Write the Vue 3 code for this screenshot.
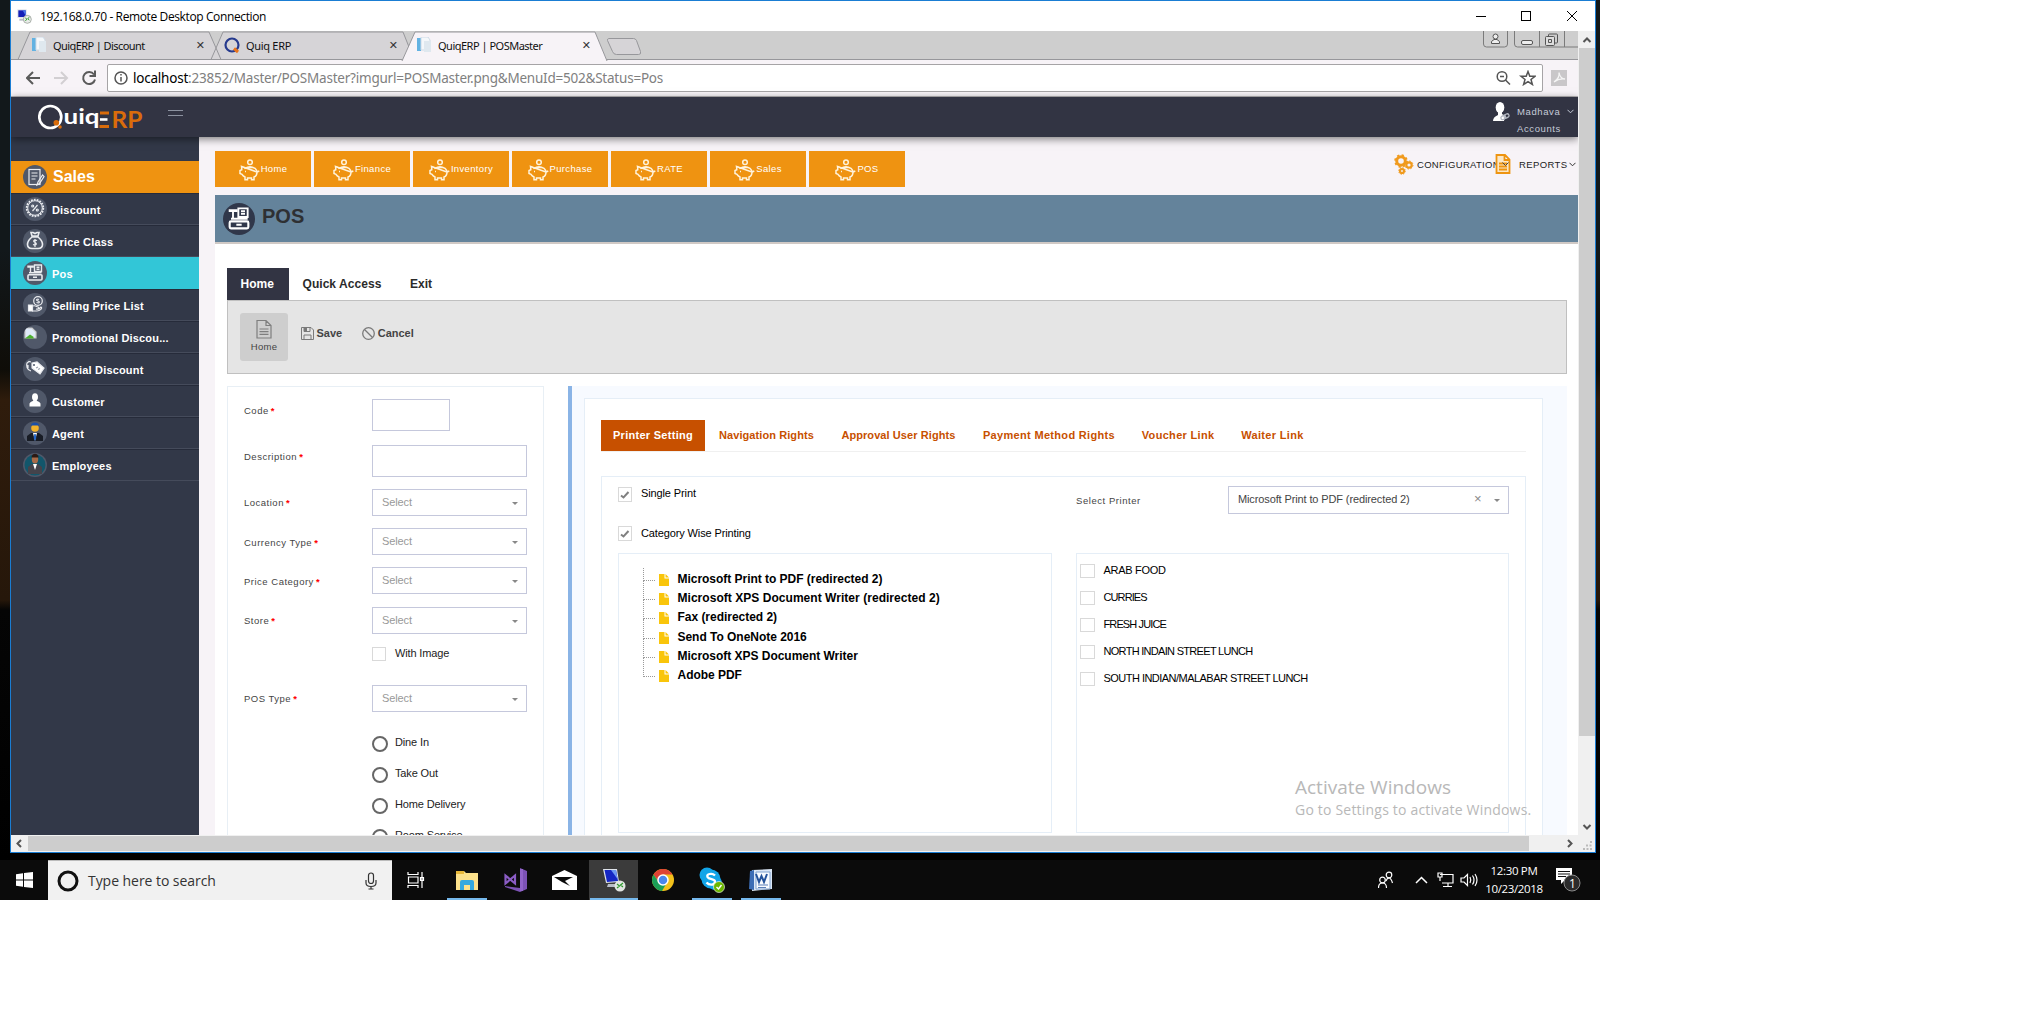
<script setup>
const icons = {
  list: '<rect x="6" y="4.500" width="11" height="15"/><path d="M8.500 8h6M8.500 11h6M8.500 14h4M19.500 10l-4.500 7-1 3 2.500-1.500 4.500-7z"/>',
  percent: '<circle cx="12" cy="11" r="8.300" stroke-width="1.800" stroke-dasharray="1.800 1.100"/><circle cx="12" cy="11" r="7.300" stroke-width="1"/><path d="M14.500 8l-5 6"/><circle cx="9.700" cy="9" r="1"/><circle cx="14.300" cy="13" r="1"/>',
  bag: '<path d="M9 8h6c6 5 6 11 0 11.500H9C3 19 3 13 9 8zM9 7L8 3.500h2l2 1 2-1h2L15 7z" stroke-width="1.600"/><path d="M14 11.500c-4-1.500-4 1.500-2 2s2 3.500-2 2M12 10v8"/>',
  pos: '<path d="M11.500 4h7v6.500h-7zM13.500 6.200h3M13.500 8.200h3M5 5.300h5V6H5zM7.500 6v6M6 11.800h12.500" stroke-width="1.400"/><rect x="5" y="13.800" width="14" height="5.200" rx="1" stroke-width="1.600"/><path d="M10 16.300h4" stroke-width="1.400"/>',
  hand: '<circle cx="15" cy="8" r="4.300"/><path d="M16 6.500c-3-1-3 1-1 1.500s2 2.500-1.500 1.500"/><path d="M5.500 12h4v6h-4z" fill="#fff"/><path d="M10 13c3-1 3 1 5 1 2 1 0 2-2 2 3 1 4-1 5-2 2 1-1 4-4 4h-5" />',
  broken: '<path d="M2 3h7l4 4v6H2z" fill="#dfe9f8" stroke="#c6c6c6"/><path d="M2 13.500l5-4 3 2 1 2z" fill="#4caf2e" stroke="none"/>',
  tags: '<path d="M9 6l5-1 7 6-4 6-8-6z" fill="#fff"/><path d="M8 14c-4-1-5-5-4-8l2-1.500 2 .5M5 11V8"/><circle cx="11" cy="8" r="1" fill="#4d5669" stroke="none"/><path d="M13 11l2-1M15 12.500l2-1" stroke="#9ba1ad"/>',
  person: '<ellipse cx="12" cy="8" rx="3" ry="3.800" fill="#fff" stroke="none"/><path d="M6.500 17.500v-3c1-2 3.500-2 4-3.500h3c.5 1.500 3 1.500 4 3.500v3z" fill="#fff" stroke="none"/>',
  agent: '<g stroke="none"><path d="M4 20v-5l4-3h8l4 3v5z" fill="#181c25"/><path d="M10 12h4l-2 8z" fill="#fff"/><path d="M11.300 13h1.400l.6 4-1.300 3-1.300-3z" fill="#2567c9"/><circle cx="12" cy="7" r="3.800" fill="#f3b32a"/><path d="M8 4.500c0-4 8-4 8 0z" fill="#1b4fa8"/></g>',
  employee: '<g stroke="none"><circle cx="12" cy="12" r="10.500" fill="#12566b"/><path d="M5 21v-7l4-3h6l4 3v7z" fill="#44434b"/><path d="M10 11h4l-2 6z" fill="#fff"/><ellipse cx="12" cy="6" rx="3.200" ry="4.500" fill="#a86b48"/><path d="M8.500 4.500c0-5 7-5 7 0z" fill="#2b1a14"/></g>'
}
const menu = [
  ['Discount', 'percent'], ['Price Class', 'bag'], ['Pos', 'pos'], ['Selling Price List', 'hand'],
  ['Promotional Discou...', 'broken'], ['Special Discount', 'tags'], ['Customer', 'person'],
  ['Agent', 'agent'], ['Employees', 'employee']
]
const modules = ['Home', 'Finance', 'Inventory', 'Purchase', 'RATE', 'Sales', 'POS']
const fields = [
  { label: 'Code', type: 'input short', cls: 'r46' },
  { label: 'Description', type: 'input', cls: 'r44' },
  { label: 'Location', type: 'select', cls: 'r39 low' },
  { label: 'Currency Type', type: 'select', cls: 'r39 low1' },
  { label: 'Price Category', type: 'select', cls: 'r40 low1' },
  { label: 'Store', type: 'select', cls: 'r40 low' },
  { check: 'With Image', cls: 'r38' },
  { label: 'POS Type', type: 'select', cls: 'r51 low' },
  { radio: 'Dine In', cls: 'r31' },
  { radio: 'Take Out', cls: 'r31' },
  { radio: 'Home Delivery', cls: 'r31' },
  { radio: 'Room Service', cls: 'r31' }
]
const tabs = ['Printer Setting', 'Navigation Rights', 'Approval User Rights', 'Payment Method Rights', 'Voucher Link', 'Waiter Link']
const printers = ['Microsoft Print to PDF (redirected 2)', 'Microsoft XPS Document Writer (redirected 2)', 'Fax (redirected 2)', 'Send To OneNote 2016', 'Microsoft XPS Document Writer', 'Adobe PDF']
const groups = ['ARAB FOOD', 'CURRIES', 'FRESH JUICE', 'NORTH INDAIN STREET LUNCH', 'SOUTH INDIAN/MALABAR STREET LUNCH']
</script>

<template>
  <div class="desktop">
    <div class="window">
      <div class="titlebar">
        <svg class="rdp" width="16" height="16" viewBox="0 0 24 24"><path d="M2 2h14v13H2z" fill="#dfe3ea"/><path d="M3.500 3.500h11v10h-11z" fill="#1420b8"/><path d="M10 3.500h4.500v8z" fill="#4b78ea"/><path d="M5 16h9v3H5z" fill="#b9bec8"/><circle cx="17" cy="17" r="6" fill="#e9ece9" stroke="#8a918a"/><path d="M14 15l2.500 2-2.500 2M20 14l-2.500 2 2.500 2" stroke="#2d9a2d" stroke-width="1.500" fill="none"/></svg>
        <span class="wtitle">192.168.0.70 - Remote Desktop Connection</span>
        <svg class="wbtns" width="104" height="14" viewBox="0 0 104 14" fill="none" stroke="#000" shape-rendering="crispEdges"><path d="M0 7.500h10M45.500 2.500h9v9h-9z"/><path d="M91 2l10 10M101 2L91 12" shape-rendering="auto"/></svg>
      </div>
      <div class="session">
        <div class="view">
          <div class="tabstrip">
            <svg class="tabshapes" width="640" height="30" viewBox="0 0 640 30">
              <g stroke="#97979b" fill="#d6d4d7"><path d="M7 28.500L19 1h179l12 27.500zM200 28.500L212 1h180l11 27.500z"/><path d="M391 30L404 1h180l12 29" fill="#f7f3f7"/><path d="M597.500 7.500h25q2 0 3 2l4 11q1 3-2 3h-22q-3 0-4-3l-5-11q0-2 1-2z"/></g>
            </svg>
            <div class="ctab c1"><svg width="15" height="16"><path d="M0 1h4v13H0z" fill="#62b2e2"/><path d="M4 0h7l2 3v10H4z" fill="#f4f7fa" stroke="#cddae6"/><path d="M7 4h7v11H7z" fill="#dfe8ef"/></svg><span>QuiqERP | Discount</span><i>✕</i></div>
            <div class="ctab c2"><svg width="16" height="17"><circle cx="8" cy="8" r="6.500" fill="none" stroke="#263a8e" stroke-width="2.200"/><path d="M10 11.500l4 3.500" stroke="#e9741c" stroke-width="3"/></svg><span>Quiq ERP</span><i>✕</i></div>
            <div class="ctab c3"><svg width="15" height="16"><path d="M0 1h4v13H0z" fill="#62b2e2"/><path d="M4 0h7l2 3v10H4z" fill="#f4f7fa" stroke="#cddae6"/><path d="M7 4h7v11H7z" fill="#dfe8ef"/></svg><span>QuiqERP | POSMaster</span><i>✕</i></div>
            <svg class="framebtns" width="96" height="18" fill="none" stroke="#7b7b7b"><path d="M1.500 0v13q0 3 3 3h18q3 0 3-3V0M32.500 0v13q0 3 3 3h61M57.500 0v16M82.500 0v16"/><g stroke="#555"><rect x="39.500" y="9.500" width="11" height="4" rx="1.500" fill="#eee"/><rect x="66.500" y="3" width="9" height="9" rx="1"/><rect x="63.500" y="5.500" width="9" height="9" rx="1" fill="#ddd"/><path d="M66.500 8.500h3v3h-3z"/><circle cx="13.500" cy="5.500" r="2.500" fill="#eee"/><path d="M9.500 12.500v-2l2.500-2h3l2.500 2v2z" fill="#eee"/></g></svg>
          </div>
          <div class="toolbar">
            <svg width="90" height="20" fill="none" stroke="#5a5a5a" stroke-width="2"><path d="M14 10H1M7 4l-6 6 6 6"/><path d="M28 10h13M35 4l6 6-6 6" stroke="#d2cfd2"/><path d="M68 6.500a6 6 0 1 0 1 5M69 2.500v5.500h-5.500"/></svg>
            <div class="omnibox">
              <svg width="14" height="14" fill="none" stroke="#555" stroke-width="1.500"><circle cx="7" cy="7" r="6"/><path d="M7 6v4.500M7 3v1.600"/></svg>
              <span class="url"><b>localhost</b>:23852/Master/POSMaster?imgurl=POSMaster.png&amp;MenuId=502&amp;Status=Pos</span>
              <svg class="omniend" width="40" height="16" fill="none" stroke="#555" stroke-width="1.500"><circle cx="6" cy="6.500" r="4.800"/><path d="M4 6.500h4M9.500 10l4.500 4.500M32 1.500l1.800 4.700 5.200.1-4 3.200 1.400 5-4.400-2.900-4.400 2.900 1.400-5-4-3.200 5.200-.1z"/></svg>
            </div>
            <svg width="16" height="16"><path d="M0 0h16v16H0z" fill="#c9c7c9"/><path d="M3 12q6-4 5-9.500q1 6 6 6.500q-6-1-11 3" stroke="#f5f5f5" fill="none" stroke-width="1.300"/></svg>
          </div>
          <header>
            <svg class="logo" width="106" height="28" viewBox="0 0 106 28"><circle cx="12.300" cy="13" r="11" fill="none" stroke="#fff" stroke-width="2.700"/><circle cx="18.300" cy="18.800" r="2.800" fill="#d96c0b"/><circle cx="22" cy="23" r="1.800" fill="#d96c0b"/><text x="25.500" y="20" fill="#fff" font-size="21" font-weight="700" textLength="36" lengthAdjust="spacingAndGlyphs">uiq</text><path d="M62 15.500h7.500" stroke="#fff" stroke-width="2.600"/><path d="M62 9h9M61.500 22.500h9.500" stroke="#d96c0b" stroke-width="3"/><text x="73.500" y="23.800" fill="#d96c0b" font-size="22" font-weight="700" textLength="31" lengthAdjust="spacingAndGlyphs">RP</text></svg>
            <div class="burger"></div>
            <svg class="avatar" width="17" height="20"><ellipse cx="7" cy="5.500" rx="4.300" ry="5.500" fill="#fff"/><path d="M5 9h4v3l3 2-1 5H0q0-4 5-6z" fill="#fff"/><g fill="none" stroke="#b4b8c2" stroke-width="1.300"><rect x="8" y="14" width="5" height="3.500" rx="1.700" transform="rotate(-30 10 16)"/><rect x="11" y="12.500" width="5" height="3.500" rx="1.700" transform="rotate(-30 13 14)"/></g></svg>
            <div class="user"><div>Madhava <svg width="7" height="5"><path d="M.5.800l3 3 3-3" fill="none" stroke="#c5cbd8"/></svg></div><div>Accounts</div></div>
          </header>
          <div class="body">
            <nav class="side">
              <div class="mhead"><svg class="round" width="24" height="24" viewBox="0 0 24 24" v-html="icons.list"></svg>Sales</div>
              <div v-for="m in menu" :key="m[0]" class="mitem" :class="{ on: m[0] === 'Pos' }"><svg class="round" width="24" height="24" viewBox="0 0 24 24" v-html="icons[m[1]]"></svg><span>{{ m[0] }}</span></div>
            </nav>
            <main>
              <div class="modbar">
                <div v-for="m in modules" :key="m" class="mod"><svg width="21" height="22" viewBox="0 0 21 22" fill="none" stroke="#fff3dc" stroke-width="1.500"><circle cx="11" cy="3.200" r="2.300"/><path d="M2.500 7.500q2 0 3.500 1.800q5-3.300 10 0 2 2 2 3.700l2.300-1M18 13q0 4-3 5v2.700h-2.500V19h-4v1.700H6V18q-2-1-3-2.700l-2-.8v-3l1.800-.7q0-1.500-.3-3.300zM8.500 8.500h5M6 12.500h1"/></svg><span>{{ m }}</span></div>
                <div class="conf">
                  <svg width="20" height="21" fill="none" stroke="#f09a1d"><circle cx="7" cy="7" r="4.300" stroke-width="3"/><circle cx="7" cy="7" r="6" stroke-width="1.600" stroke-dasharray="2.300 2.400"/><circle cx="15" cy="11" r="2.700" stroke-width="2.200"/><circle cx="15" cy="11" r="4" stroke-dasharray="1.500 1.600"/><circle cx="8" cy="17" r="2" stroke-width="2.200"/><circle cx="8" cy="17" r="3.300" stroke-dasharray="1.300 1.300"/></svg>
                  <span>CONFIGURATION</span>
                  <svg class="rep" width="16" height="20"><path d="M1.500 1h8.500l4.500 4.500V19h-13zM9.500 1v5h5M4 9.500h8M4 12.500h8M4 15.500h8" fill="#fbe7c6" stroke="#ee9410" stroke-width="1.800"/><path d="M7.500 8.500l3 3 3-3" fill="none" stroke="#444"/></svg>
                  <span class="reports">REPORTS</span><svg width="7" height="5"><path d="M.5.800l3 3 3-3" fill="none" stroke="#333"/></svg>
                </div>
              </div>
              <div class="pagehead"><svg class="round big" width="32" height="32" viewBox="0 0 24 24" v-html="icons.pos"></svg>POS</div>
              <div class="page">
                <div class="rtabs"><span class="on">Home</span><span>Quick Access</span><span>Exit</span></div>
                <div class="ribbon">
                  <div class="rhome"><svg width="16" height="20" fill="none" stroke="#7e7e7e" stroke-width="1.200"><path d="M1 1.500h9l5 5V19H1zM10 1.500v5h5M3.500 10h9M3.500 12.700h9M3.500 15.400h9"/></svg>Home</div>
                  <div class="act"><svg width="13" height="13" fill="none" stroke="#7a7a7a"><path d="M.5.500h9.500l2.500 2.500v9.500H.5zM3 .5v4h6v-4M3 12.500V8h7v4.500"/><path d="M3.500 1h2v3h-2z" fill="#777"/></svg><span>Save</span></div>
                  <div class="act cancel"><svg width="13" height="13" fill="none" stroke="#7a7a7a" stroke-width="1.300"><circle cx="6.500" cy="6.500" r="5.800"/><path d="M2.500 2.500l8 8"/></svg><span>Cancel</span></div>
                </div>
                <div class="cols">
                  <section class="form">
                    <div v-for="(f, i) in fields" :key="i" class="row" :class="f.cls">
                      <label><template v-if="f.label">{{ f.label }} <em>*</em></template></label>
                      <div v-if="f.type" class="ctl" :class="f.type"><template v-if="f.type === 'select'">Select<i class="caret"></i></template></div>
                      <div v-else-if="f.check" class="opt"><i class="box"></i>{{ f.check }}</div>
                      <div v-else class="opt"><i class="radio"></i>{{ f.radio }}</div>
                    </div>
                  </section>
                  <section class="panel">
                    <div class="inner">
                      <div class="ptabs"><span v-for="(t, i) in tabs" :key="t" :class="{ on: i === 0 }">{{ t }}</span></div>
                      <div class="pbox">
                        <div class="pl">
                          <div class="ck"><i class="box"><svg width="10" height="8"><path d="M1 4.500l2.500 2L8.500 1" fill="none" stroke="#808080" stroke-width="2"/></svg></i><span>Single Print</span></div>
                          <div class="ck two"><i class="box"><svg width="10" height="8"><path d="M1 4.500l2.500 2L8.500 1" fill="none" stroke="#808080" stroke-width="2"/></svg></i><span>Category Wise Printing</span></div>
                          <div class="tree">
                            <div v-for="p in printers" :key="p" class="node"><svg width="10" height="12"><path d="M0 0h5.500v4.500H10V12H0z" fill="#f9c50b"/><path d="M6.500 0L10 3.500H6.500z" fill="#f9c50b"/></svg>{{ p }}</div>
                          </div>
                        </div>
                        <div class="pr">
                          <div class="selrow"><label>Select Printer</label><div class="ctl select wide">Microsoft Print to PDF (redirected 2)<b>×</b><i class="caret"></i></div></div>
                          <div class="cats"><div v-for="g in groups" :key="g" class="cat"><i class="box"></i>{{ g }}</div></div>
                        </div>
                      </div>
                    </div>
                  </section>
                </div>
              </div>
            </main>
          </div>
        </div>
        <div class="vbar"><svg width="16" height="17"><path d="M4.500 11L8 7.500l3.500 3.500" fill="none" stroke="#555" stroke-width="2"/></svg><div class="vthumb"></div><svg class="vdown" width="16" height="17"><path d="M4.500 6L8 9.500 11.500 6" fill="none" stroke="#555" stroke-width="2"/></svg></div>
      </div>
      <div class="hbar"><svg width="17" height="15"><path d="M10 4L6.500 7.500 10 11" fill="none" stroke="#555" stroke-width="2"/></svg><div class="hthumb"></div><svg width="66" height="15"><path d="M39 4l3.500 3.500L39 11" fill="none" stroke="#555" stroke-width="2"/><path d="M61 6h2M57 9.500h6M54 13h9" stroke="#bbb" stroke-width="2" stroke-dasharray="2 1.500"/></svg></div>
    </div>
    <div class="watermark"><div>Activate Windows</div><p>Go to Settings to activate Windows.</p></div>
    <div class="taskbar">
      <div class="start"><svg width="17" height="16" fill="#fff"><path d="M0 2.200l7-.9v6.200H0zM8 1.100L17 0v7.500H8zM0 8.500h7v6.200l-7-.9zM8 8.500h9V16l-9-1.100z"/></svg></div>
      <div class="search"><svg width="22" height="22"><circle cx="11" cy="11" r="9" fill="none" stroke="#111" stroke-width="3"/></svg><span>Type here to search</span><svg width="12" height="18" fill="none" stroke="#333" stroke-width="1.200"><rect x="3.500" y="1" width="5" height="10.500" rx="2.500"/><path d="M1 8v3q0 3.500 5 3.500t5-3.500V8M6 14.500V17M3.500 17h5"/></svg></div>
      <div class="apps">
        <div class="app tv"><svg width="18" height="16" fill="none" stroke="#fff" stroke-width="1.200"><path d="M1 0v2.500h10V0M1.500 5h9.500v6H1.500zM1 16v-2.500h10V16M15 0v16M13.500 5.500h3v3h-3z"/></svg></div>
        <div class="app run"><svg width="22" height="22"><path d="M0 2h8l2 2h12v17H0z" fill="#fce18b"/><path d="M0 2h8v3H0z" fill="#e8b839"/><path d="M4 21v-8q0-2 2-2h10q2 0 2 2v8h-4v-5H8v5z" fill="#35a9df"/></svg></div>
        <div class="app"><svg width="25" height="24"><path d="M17 0l7 3v18l-7 3-15-5v-1l15 2z" fill="#7c52b5"/><path d="M18.500 1v22" stroke="#9164c9" stroke-width="3"/><path d="M2.500 7.500l9.500 8v-8l-9.500 8z" fill="none" stroke="#8a5cc4" stroke-width="2.200"/></svg></div>
        <div class="app"><svg width="25" height="20"><path d="M0 6l12.500-6L25 6v14H0z" fill="#fff"/><path d="M2 7h19l-8 4 5 5-8-4z" fill="#0b0b0b"/></svg></div>
        <div class="app run active"><svg width="24" height="24" viewBox="0 0 24 24"><path d="M1 1h14l2 13-13 1z" fill="#dfe3ea"/><path d="M2.500 2h11.500l2 11-11 1z" fill="#1526c4"/><path d="M9 2h5l1.500 9z" fill="#6c97f2"/><path d="M6 16h8l1 3H5z" fill="#b9bec8"/><circle cx="18" cy="18" r="5.500" fill="#e2e5e2"/><path d="M15 16l2.500 2-2.500 2M21 15l-2.500 2 2.500 2" stroke="#2d9a2d" stroke-width="1.200" fill="none"/></svg></div>
        <div class="app"><svg width="24" height="24" viewBox="0 0 24 24"><circle cx="12" cy="12" r="11" fill="#f3c11b"/><path d="M2.500 6.500A11 11 0 0 1 21.500 6.500H12l-4 8z" fill="#de4335"/><path d="M2.500 6.500A11 11 0 0 0 11 23l5-8.500H8z" fill="#1b9f57"/><circle cx="12" cy="12" r="5" fill="#4a87ee" stroke="#fff" stroke-width="1.500"/></svg></div>
        <div class="app run"><svg width="26" height="26"><circle cx="8" cy="8" r="7.500" fill="#12a5e8"/><circle cx="16" cy="16" r="7" fill="#12a5e8"/><circle cx="12" cy="12" r="9.500" fill="#12a5e8"/><path d="M16 8.500C13 5.500 7 7 8.500 10s8 1.500 7.500 5-6 3.500-8.500.5" stroke="#fff" stroke-width="2.300" fill="none"/><circle cx="20" cy="20" r="5.500" fill="#6bb700" stroke="#fff" stroke-width=".6"/><path d="M17.500 20l2 2 3-4" stroke="#fff" stroke-width="1.400" fill="none"/></svg></div>
        <div class="app run"><svg width="24" height="22"><path d="M3 1l20-1v20l-20 2z" fill="#dbe7f6"/><path d="M7 3h14v17H7z" fill="#f8fbff" stroke="#7fa1d0"/><path d="M1 2l4-1v20l-5-1z" fill="#3c6db5"/><path d="M7 5l3 8 2.500-6L15 13l3-8" fill="none" stroke="#24539c" stroke-width="2"/><path d="M9 16h10M9 18.500h8" stroke="#5a7fb8"/></svg></div>
      </div>
      <svg class="tray" width="102" height="18" fill="none" stroke="#fff" stroke-width="1.200"><circle cx="4.500" cy="9" r="2.800"/><path d="M.5 17q0-5 4-5t4 5"/><circle cx="11" cy="4" r="2.800"/><path d="M8 10q1-3 3-3t3.500 5"/><path d="M38 12l5.500-5.500L49 12" stroke-width="1.500"/><path d="M62 3.500h13v8.500H64M70 12v3M65 15.500h9M60 2h4v4h-4zM62 6v4"/><path d="M83 7h3l3.500-3.500v11L86 11h-3zM92 6q1.500 3 0 6M94.500 4.500q3 4.500 0 9M97 3q4 6 0 12"/></svg>
      <div class="clock"><div>12:30 PM</div><div>10/23/2018</div></div>
      <div class="note"><svg width="26" height="26"><path d="M1 2h16v12h-7l-4 4v-4H1z" fill="#fff"/><path d="M3 5.500h12M3 8h12M3 10.500h8" stroke="#111"/><circle cx="17" cy="17" r="8" fill="#2b2b2b" stroke="#8a8a8a"/><text x="14" y="21.500" font-size="12" fill="#fff">1</text></svg></div>
    </div>
  </div>
</template>

<style>
body { margin: 0; background: #fff; }
</style>
<style scoped>
* { box-sizing: border-box; }
.desktop { position: relative; width: 1600px; height: 900px; background: linear-gradient(#12181b 0, #12181b 250px, #0f0d08 370px, #2f1c0c 400px, #26170a 600px, #050505 610px, #000 860px); font-family: "Liberation Sans", Arial, sans-serif; font-size: 11px; color: #222; overflow: hidden; white-space: nowrap; }
svg { display: block; flex: none; }
i, em { font-style: normal; }
.window { width: 1586px; height: 853px; margin-left: 10px; border: 1px solid #1a7dd3; background: #f0f0f0; }
.titlebar { height: 30px; background: #fff; display: flex; align-items: center; font: 12px "Open Sans", "Noto Sans", sans-serif; color: #000; }
.rdp { margin-left: 5px; }
.wtitle { margin-left: 8px; letter-spacing: -.38px; }
.wbtns { margin-left: auto; margin-right: 15px; }
.session { display: flex; height: 804px; }
.view { width: 1567px; overflow: hidden; background: #f7f3f7; }
.tabstrip { position: relative; height: 29px; background: #cecece; border-bottom: 1px solid #97979b; display: flex; font-family: "Noto Sans", sans-serif; font-size: 11px; color: #111; }
.tabshapes { position: absolute; left: 0; top: 0; }
.ctab { position: relative; display: flex; align-items: center; height: 28px; }
.ctab span { margin-left: 6px; flex: 1; letter-spacing: -.58px; }
.ctab.c2 span { letter-spacing: -.3px; }
.ctab.c3 span { letter-spacing: -.5px; }
.ctab i { font: bold 11px "DejaVu Sans", sans-serif; color: #333; }
.c1 { width: 173px; margin-left: 21px; }
.c2 { width: 174px; margin-left: 19px; }
.c3 { width: 174px; margin-left: 19px; }
.framebtns { margin-left: auto; }
.toolbar { height: 37px; border-bottom: 1px solid #b6b4b6; display: flex; align-items: center; padding: 0 11px 0 15px; }
.toolbar > svg:first-child { width: 81px; }
.omnibox { width: 1436px; height: 28px; margin-right: 8px; border: 1px solid #a6a4a6; border-radius: 2px; background: #fff; display: flex; align-items: center; padding: 0 6px; font-family: "Noto Sans", sans-serif; font-size: 13.500px; color: #808080; }
.url { margin-left: 5px; letter-spacing: -.22px; }
.url b { font-weight: 400; color: #000; }
.omniend { margin-left: auto; }
header { position: relative; z-index: 2; height: 40px; background: #323443; display: flex; box-shadow: 0 2px 8px rgba(0,0,0,.5); }
.logo { margin: 7px 0 0 27px; font-family: Lato, sans-serif; }
.burger { width: 15px; height: 6px; margin: 13px 0 0 24px; border: solid #8c92a0; border-width: 1px 0; }
.avatar { margin: 5px 0 0 auto; }
.user { width: 61px; margin: 6px 0 0 7px; color: #c5cbd8; font-size: 9.500px; line-height: 17px; letter-spacing: .6px; }
.user div { display: flex; align-items: center; justify-content: space-between; padding-right: 4px; }
.body { display: flex; height: 698px; }
.side { width: 188px; flex: none; background: #323848; padding-top: 24px; color: #fff; font-weight: bold; }
.mhead { height: 32px; background: #ef9311; display: flex; align-items: center; font-size: 16px; padding-left: 12px; }
.mhead .round { margin-right: 6px; }
.mitem { height: 32px; display: flex; align-items: center; padding-left: 12px; letter-spacing: .18px; border-top: 1px solid #262b3a; border-bottom: 1px solid #454b5b; }
.mitem .round { margin-right: 5px; }
.mitem span { padding-top: 1px; }
.mitem.on { background: #32c6d7; border-color: #32c6d7; }
.round { border-radius: 50%; background: #505869; fill: none; stroke: #e9ebef; stroke-width: 1.200; }
.big { background: #30374a; stroke: #fff; }
main { flex: 1; padding: 14px 0 0 16px; min-width: 0; }
.modbar { display: flex; height: 44px; gap: 3px; }
.mod { width: 96px; height: 36px; background: #ef9311; color: #fff; font-size: 9.500px; letter-spacing: .35px; display: flex; align-items: center; justify-content: center; }
.mod svg { margin-top: 2px; margin-right: 1px; }
.mod span { padding-bottom: 1px; }
.conf { display: flex; align-items: center; height: 26px; margin-left: auto; padding-right: 2px; font-size: 9.500px; letter-spacing: .3px; color: #222; }
.conf span { margin-left: 3px; width: 81px; }
.conf .rep { margin-left: -3px; }
.conf .reports { width: 50px; margin-left: 8px; letter-spacing: .4px; }
.pagehead { height: 49px; background: #64839b; border-bottom: 2px solid #d0c9c5; display: flex; align-items: flex-start; padding-left: 8px; font-size: 20px; font-weight: bold; color: #2e3033; line-height: 42px; }
.pagehead .big { margin: 8px 7px 0 0; }
.page { background: #fff; height: 800px; padding: 24px 11px 0 12px; }
.rtabs { display: flex; height: 32px; font-size: 12px; font-weight: bold; line-height: 32px; color: #2b2b2b; }
.rtabs span { padding: 0 13.500px; letter-spacing: .05px; }
.rtabs span + span + span { padding-left: 15px; }
.rtabs .on { background: #323443; color: #fff; width: 62px; }
.ribbon { height: 74px; background: #e5e5e5; border: 1px solid #c0c0c0; display: flex; padding: 12px; color: #444; font-weight: bold; }
.rhome { width: 48px; height: 48px; background: #cecece; border-radius: 3px; display: flex; flex-direction: column; align-items: center; padding-top: 6px; font-weight: 400; font-size: 9.500px; line-height: 15px; letter-spacing: .3px; }
.rhome svg { margin-bottom: 0; }
.act { display: flex; align-items: center; height: 17px; margin: 12px 0 0 13px; }
.act svg { margin-right: 2.500px; }
.act span { padding-bottom: 1px; }
.cancel { margin-left: 20px; }
.cols { display: flex; margin-top: 12px; }
.form { width: 317px; height: 600px; border: 1px solid #e8eff5; padding: 12px 0 0 16px; }
.row { display: flex; }
.row label { width: 128px; padding-top: 5px; font-size: 9.500px; line-height: 14px; letter-spacing: .5px; color: #444; flex: none; }
.low label { padding-top: 7px; }
.low1 label { padding-top: 8px; }
.row em { color: #f00; font-weight: bold; margin-left: -1px; }
.r46 { height: 46px; } .r44 { height: 44px; } .r39 { height: 39px; } .r40 { height: 40px; } .r38 { height: 38px; } .r51 { height: 51px; } .r31 { height: 31px; }
.ctl { width: 155px; border: 1px solid #c5c8dc; background: #fff; height: 32px; position: relative; }
.short { width: 78px; }
.select { height: 27px; padding-left: 9px; line-height: 24px; color: #999; letter-spacing: -.12px; }
.caret { position: absolute; right: 8px; top: 12px; border: 3.500px solid transparent; border-top-color: #888; border-bottom: 0; }
.opt { display: flex; align-items: flex-start; line-height: 13px; letter-spacing: -.14px; }
.opt .box { margin-right: 9px; }
.box { width: 14px; height: 14px; border: 1px solid #d9d9d9; flex: none; display: flex; align-items: center; justify-content: center; background: #fff; }
.radio { width: 16px; height: 16px; border: 2px solid #666; border-radius: 50%; margin-right: 7px; }
.panel { margin-left: 24px; width: 999px; height: 600px; border-left: 4px solid #8ab4e6; background: #f7faff; padding: 12px 0 0 12px; }
.inner { width: 959px; height: 620px; background: #fff; border: 1px solid #e5eef7; padding: 21px 16px 0; }
.ptabs { display: flex; height: 32px; border-bottom: 1px solid #f0f0f0; font-weight: bold; color: #c75000; line-height: 31px; letter-spacing: .08px; }
.ptabs span { margin-right: 27.500px; }
.ptabs span:nth-child(n+4) { letter-spacing: .32px; margin-right: 26.800px; }
.ptabs .on { width: 104px; background: #c75000; color: #fff; text-align: center; margin-right: 14px; letter-spacing: .28px; }
.pbox { margin-top: 24px; height: 420px; border: 1px solid #e5eef7; padding: 0 16px; display: flex; justify-content: space-between; color: #000; letter-spacing: -.12px; }
.pl { width: 434px; }
.ck { display: flex; margin-top: 10px; height: 39px; line-height: 12px; }
.ck .box { height: 15px; margin-right: 9px; }
.ck.two { margin-top: 0; height: 27px; line-height: 14px; }
.tree { height: 280px; border: 1px solid #e5eef7; padding: 16px 0 0 24px; font-size: 12px; font-weight: bold; letter-spacing: -.03px; }
.node { position: relative; display: flex; align-items: center; height: 19.200px; line-height: 19px; padding-left: 16px; }
.node::before { content: ""; position: absolute; left: 0; top: -9px; width: 11px; height: 19px; border: dotted #999; border-width: 0 0 1px 1px; }
.node:first-child::before { top: -2px; height: 12px; }
.node:nth-child(2) { letter-spacing: .04px; }
.node svg { margin-right: 8.500px; margin-top: 1px; }
.pr { width: 433px; padding-top: 9px; }
.selrow { display: flex; height: 67px; }
.selrow label { width: 152px; color: #444; font-size: 9.500px; line-height: 29px; letter-spacing: .55px; }
.wide { width: 281px; height: 28px; color: #444; }
.wide b { position: absolute; right: 26.500px; font-weight: 400; color: #888; font-size: 13px; }
.cats { height: 280px; border: 1px solid #e5eef7; padding: 10px 0 0 3px; letter-spacing: -.3px; }
.cat { display: flex; height: 27px; line-height: 13px; }
.cat:nth-child(2) { letter-spacing: -.9px; }
.cat:nth-child(3) { letter-spacing: -.88px; }
.cat:nth-child(4) { letter-spacing: -.7px; }
.cat:nth-child(5) { letter-spacing: -.53px; }
.cat .box { width: 15px; margin-right: 8.500px; }
.vbar { width: 16px; margin-left: 1px; background: #f0f0f0; }
.vthumb { height: 688px; background: #cdcdcd; }
.vdown { margin-top: 83px; }
.hbar { display: flex; height: 15px; margin-top: 1px; }
.hthumb { flex: 1; background: #cdcdcd; }
.watermark { position: absolute; left: 1295px; top: 774px; color: #b8b8b8; font-family: "Open Sans", "Noto Sans", sans-serif; font-size: 19px; line-height: 26px; }
.watermark p { margin: 0; font-size: 14px; line-height: 19px; letter-spacing: .2px; }
.taskbar { position: absolute; left: 0; top: 860px; width: 1600px; height: 40px; background: #0b0b0b; display: flex; align-items: center; font-family: "Open Sans", "Noto Sans", sans-serif; color: #fff; }
.start { width: 48px; padding-left: 16px; }
.search { width: 344px; height: 40px; background: #f1f1f1; border-top: 1px solid #bbb; color: #333; display: flex; align-items: center; padding: 0 15px 0 9px; font-size: 14px; }
.search span { flex: 1; margin-left: 9px; letter-spacing: -.05px; }
.apps { display: flex; height: 40px; }
.app { width: 49px; height: 40px; display: flex; align-items: center; justify-content: center; }
.tv { width: 50px; padding-right: 2px; }
.run { background: linear-gradient(#76b9ed, #76b9ed) 50% 100% / 40px 2px no-repeat; }
.run.active { background: linear-gradient(#76b9ed, #76b9ed) 50% 100% / 48px 2px no-repeat #3b3b3b; }
.tray { margin-left: auto; margin-right: 3px; }
.clock { width: 62px; font-size: 11.500px; line-height: 18px; text-align: center; letter-spacing: -.35px; }
.note { width: 52px; height: 28px; padding-left: 10px; margin-right: 3px; }
</style>
